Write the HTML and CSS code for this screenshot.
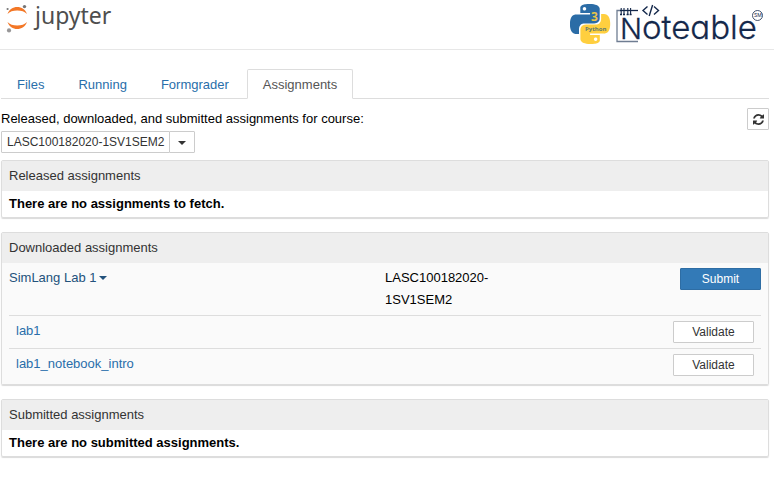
FILE: index.html
```html
<!DOCTYPE html>
<html lang="en">
<head>
<meta charset="utf-8">
<meta name="viewport" content="width=device-width, initial-scale=1">
<title>Assignments</title>
<link rel="stylesheet" href="styles.css">
</head>
<body>
<header class="header">
  <a class="logo" href="#" aria-label="jupyter">
    <svg width="112" height="36" viewBox="0 0 112 36">
      <path fill="#f37726" d="M7.500 14C9 9.500 13 7 17.200 7S25.500 9.500 27 14C24.800 11.600 21.300 10.500 17.200 10.500S9.700 11.600 7.500 14z"/>
      <path fill="#f37726" d="M7.500 22C9 26.500 13 29 17.200 29S25.500 26.500 27 22C24.800 24.400 21.300 25.500 17.200 25.500S9.700 24.400 7.500 22z"/>
      <circle cx="24.500" cy="6.600" r="1.700" fill="#767677"/>
      <circle cx="7.600" cy="9" r="1.100" fill="#767677"/>
      <circle cx="9" cy="30.400" r="2.100" fill="#989798"/>
      <text class="logo-word" x="35" y="24">jupyter</text>
    </svg>
  </a>
  <a class="brand" href="#" aria-label="Noteable">
    <svg width="196" height="46" viewBox="0 0 196 46">
      <g transform="translate(0 4) scale(1.667)">
        <path fill="#2b6ca6" d="M14.250.18l.9.2.73.26.59.3.45.32.34.34.25.34.16.33.1.3.04.26.02.2-.01.13V8.500l-.05.63-.13.55-.21.46-.26.38-.3.31-.33.25-.35.19-.35.14-.33.1-.3.07-.26.04-.21.02H8.770l-.69.05-.59.14-.5.22-.41.27-.33.32-.27.35-.2.36-.15.37-.1.35-.07.32-.04.27-.02.21v3.060H3.170l-.21-.03-.28-.07-.32-.12-.35-.18-.36-.26-.36-.36-.35-.46-.32-.59-.28-.73-.21-.88-.14-1.050-.05-1.230.06-1.220.16-1.040.24-.87.32-.71.36-.57.4-.44.42-.33.42-.24.4-.16.36-.1.32-.05.24-.01h.16l.06.01h8.160v-.83H6.180l-.01-2.750-.02-.37.05-.34.11-.31.17-.28.25-.26.31-.23.38-.2.44-.18.51-.15.58-.12.64-.1.71-.06.77-.04.84-.02 1.270.05zm-6.300 1.980l-.23.33-.08.41.08.41.23.34.33.22.41.09.41-.09.33-.22.23-.34.08-.41-.08-.41-.23-.33-.33-.22-.41-.09-.41.09z"/>
        <path fill="#ffcf3f" d="M21.100 6.110l.28.06.32.12.35.18.36.27.36.35.35.47.32.59.28.73.21.88.14 1.040.05 1.230-.06 1.230-.16 1.040-.24.86-.32.71-.36.57-.4.45-.42.33-.42.24-.4.16-.36.09-.32.05-.24.02-.16-.01h-8.220v.82h5.840l.01 2.760.02.36-.05.34-.11.31-.17.29-.25.25-.31.24-.38.2-.44.17-.51.15-.58.13-.64.09-.71.07-.77.04-.84.01-1.270-.04-1.070-.14-.9-.2-.73-.25-.59-.3-.45-.33-.34-.34-.25-.34-.16-.33-.1-.3-.04-.25-.02-.2.01-.13v-5.340l.05-.64.13-.54.21-.46.26-.38.3-.32.33-.24.35-.2.35-.14.33-.1.3-.06.26-.04.21-.02.13-.01h5.840l.69-.05.59-.14.5-.21.41-.28.33-.32.27-.35.2-.36.15-.36.1-.35.07-.32.04-.28.02-.21V6.070h2.090l.14.01zm-6.470 14.250l-.23.33-.08.41.08.41.23.33.33.23.41.08.41-.08.33-.23.23-.33.08-.41-.08-.41-.23-.33-.33-.23-.41-.08-.41.08z"/>
      </g>
      <text class="py-version" x="21" y="21">3</text>
      <text class="py-name" x="15" y="31">Python</text>
      <g fill="none" stroke="#14284b">
        <path d="M51 10.500h-4v31h21" stroke="#6f7d92" stroke-width="1.300"/>
        <path d="M50 10.500h18" stroke-width="1.300"/>
        <path d="M51.200 8v7M54 8v7M57.800 8v7M60.600 8v7" stroke-width="1.100"/>
        <path d="M50 14.500h2M53 14.500h2M56.600 14.500h2M59.600 14.500h2" stroke-width="1.500"/>
        <path d="M77.500 6.500l-4.500 4 4.500 4M84 6.500l4.500 4-4.500 4M82.600 5l-3.400 11" stroke-width="1.400"/>
        <circle cx="187.500" cy="15.500" r="5" stroke-width=".8"/>
      </g>
      <text class="brand-word" x="50" y="39"><tspan class="brand-initial">N</tspan>oteable</text>
      <text class="brand-mark" x="184" y="17">SM</text>
    </svg>
  </a>
</header>

<main class="page">
  <nav class="tabs">
    <a href="#">Files</a>
    <a href="#">Running</a>
    <a href="#">Formgrader</a>
    <a href="#" class="active" aria-current="page">Assignments</a>
  </nav>

  <div class="toolbar">
    <div class="course">
      <span class="course-label">Released, downloaded, and submitted assignments for course:</span>
      <div class="course-picker">
        <button type="button" class="btn">LASC100182020-1SV1SEM2</button>
        <button type="button" class="btn btn-toggle" aria-label="Choose course"><span class="caret"></span></button>
      </div>
    </div>
    <button type="button" class="btn btn-refresh" aria-label="Refresh">
      <svg width="11" height="11" viewBox="0 0 1536 1536"><path fill="#333" d="M1511 928q0 5-1 7-64 268-268 434.500T764 1536q-146 0-282.500-55T238 1324l-129 129q-19 19-45 19t-45-19-19-45V960q0-26 19-45t45-19h448q26 0 45 19t19 45-19 45l-137 137q71 66 161 102t187 36q134 0 250-65t186-179q11-17 53-117 8-23 30-23h192q13 0 22.500 9.500t9.500 22.500zm25-800v448q0 26-19 45t-45 19h-448q-26 0-45-19t-19-45 19-45l138-138Q969 256 768 256q-134 0-250 65T332 500q-11 17-53 117-8 23-30 23H50q-13 0-22.500-9.500T18 608v-7q65-268 270-434.500T768 0q146 0 284 55.500T1297 212l130-129q19-19 45-19t45 19 19 45z"/></svg>
    </button>
  </div>

  <section class="panel">
    <h2>Released assignments</h2>
    <p class="empty">There are no assignments to fetch.</p>
  </section>

  <section class="panel">
    <h2>Downloaded assignments</h2>
    <div class="items">
      <div class="item">
        <a class="item-name" href="#">SimLang Lab 1<span class="caret"></span></a>
        <div class="item-course">LASC100182020-1SV1SEM2</div>
        <button type="button" class="btn btn-action btn-primary">Submit</button>
      </div>
      <div class="notebook">
        <a href="#">lab1</a>
        <button type="button" class="btn btn-action">Validate</button>
      </div>
      <div class="notebook">
        <a href="#">lab1_notebook_intro</a>
        <button type="button" class="btn btn-action">Validate</button>
      </div>
    </div>
  </section>

  <section class="panel">
    <h2>Submitted assignments</h2>
    <p class="empty">There are no submitted assignments.</p>
  </section>
</main>
</body>
</html>
```
FILE: styles.css
```css
* {
  box-sizing: border-box;
}

body {
  margin: 0;
  background: #fff;
  color: #000;
  font: 13px/22px "Liberation Sans", Arial, sans-serif;
}

a {
  color: #296eaa;
  text-decoration: none;
}

.header {
  display: flex;
  justify-content: space-between;
  height: 50px;
  padding-right: 8px;
  border-bottom: 1px solid #e7e7e7;
}

.logo svg,
.brand svg {
  display: block;
}

.logo-word {
  font: 23px "Noto Sans", sans-serif;
  fill: #4e4e4e;
}

.brand-word {
  font: 300 33px Inter, sans-serif;
  font-feature-settings: "cv11";
  fill: #14284b;
  stroke: #14284b;
  stroke-width: .3px;
}

.brand-initial {
  font-size: 29px;
}

.brand-mark {
  font: 5px Inter, sans-serif;
  fill: #14284b;
}

.py-version {
  font: bold 12px "Open Sans", sans-serif;
  fill: #e8c34a;
}

.py-name {
  font: bold 6px "Open Sans", sans-serif;
  fill: #5f7a70;
}

.page {
  padding: 19px 5px 0 1px;
}

.tabs {
  display: flex;
  gap: 2px;
  border-bottom: 1px solid #ddd;
}

.tabs a {
  height: 30px;
  margin-bottom: -1px;
  padding: 4px 15px;
  border: 1px solid transparent;
  border-radius: 2px 2px 0 0;
}

.tabs .active {
  border-color: #ddd #ddd #fff;
  background: #fff;
  color: #555;
}

.toolbar {
  display: flex;
  justify-content: space-between;
  align-items: flex-start;
  padding: 9px 0 7px;
}

.course-label {
  display: block;
}

.course-picker {
  display: flex;
  margin-top: 1px;
}

.btn {
  height: 22px;
  padding: 0 5px;
  border: 1px solid #ccc;
  border-radius: 1px;
  background: #fff;
  color: #333;
  font: 12px/18px "Liberation Sans", Arial, sans-serif;
}

.btn-toggle {
  width: 26px;
  margin-left: -1px;
}

.btn-refresh {
  display: grid;
  place-items: center;
  width: 22px;
}

.btn-action {
  width: 81px;
}

.btn-primary {
  border-color: #2e6da4;
  background: #337ab7;
  color: #fff;
}

.caret {
  display: inline-block;
  border: 4px solid transparent;
  border-top-color: currentColor;
  border-bottom: 0;
  vertical-align: middle;
}

.panel {
  margin-bottom: 14px;
  border: 1px solid #ddd;
  border-radius: 2px;
  box-shadow: 0 1px 1px rgba(0, 0, 0, .15);
}

.panel h2 {
  margin: 0;
  padding: 4px 7px;
  background: #eee;
  color: #333;
  font-size: 13px;
  font-weight: normal;
}

.empty {
  margin: 0;
  padding: 2px 7px;
  font-weight: bold;
}

.items {
  padding: 0 7px 3px;
  background: #fafafa;
}

.item {
  display: grid;
  grid-template-columns: 6fr 2fr 4fr;
  align-items: start;
  padding: 4px 0;
}

.item-name {
  color: #23527c;
}

.item-name .caret {
  margin: -2px 0 0 3px;
}

.item .btn {
  justify-self: end;
  margin-top: 1px;
}

.notebook {
  display: flex;
  justify-content: space-between;
  padding: 5px 7px;
  border-top: 1px solid #ddd;
}

.notebook a {
  margin-top: -1px;
}
```
